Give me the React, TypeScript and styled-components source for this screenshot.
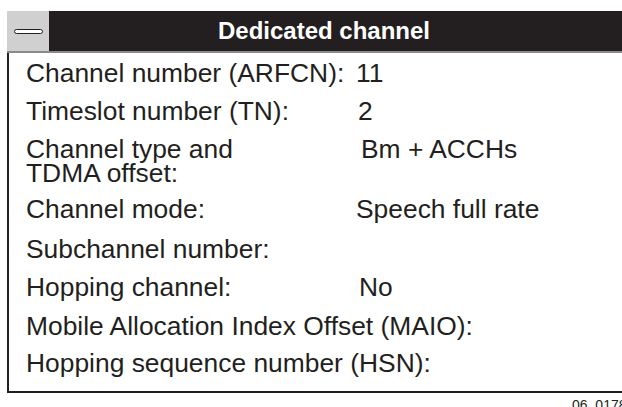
import styled, { createGlobalStyle } from "styled-components";

const ink = "#231f20";

const GlobalStyle = createGlobalStyle`
  html, body {
    margin: 0;
    padding: 0;
    background: #ffffff;
    overflow: hidden;
  }
  body {
    font-family: "Liberation Sans", Arial, Helvetica, sans-serif;
    color: ${ink};
  }
`;

const Page = styled.div`
  box-sizing: border-box;
  width: 622px;
  height: 407px;
  overflow: hidden;
  padding: 11px 0 0 7px;
`;

const Panel = styled.div`
  width: 634px;
  display: flex;
  flex-direction: column;
`;

const TitleBar = styled.div`
  height: 40px;
  display: flex;
  align-items: stretch;
  background: ${ink};
  border-bottom: 2px solid #8a8a8a;
`;

const MenuButton = styled.div`
  width: 42px;
  background: #d0d0d0;
  display: flex;
  align-items: center;
  justify-content: center;
`;

const MenuBar = styled.span`
  display: block;
  width: 27px;
  height: 3px;
  border: 1.5px solid ${ink};
  border-radius: 3px;
  background: #ffffff;
`;

const Title = styled.div`
  flex: 1;
  padding-right: 42px;
  display: flex;
  align-items: center;
  justify-content: center;
  color: #ffffff;
  font-weight: bold;
  font-size: 24px;
`;

const Body = styled.div`
  border-left: 2.5px solid ${ink};
  border-bottom: 2.5px solid ${ink};
  padding: 1px 0 8px 17px;
  display: flex;
  flex-direction: column;
`;

const Row = styled.div<{ $height: number }>`
  display: grid;
  grid-template-columns: 330px 1fr;
  height: ${(p) => p.$height}px;
  font-size: 26.4px;
  line-height: 38px;
  white-space: nowrap;
`;

const Label = styled.div<{ $wrap?: boolean }>`
  line-height: ${(p) => (p.$wrap ? "24px" : "38px")};
  padding-top: ${(p) => (p.$wrap ? "7px" : "0")};
`;

const Value = styled.div<{ $shift: number }>`
  padding-left: ${(p) => p.$shift}px;
`;

const Caption = styled.div`
  padding: 5px 0 0 565px;
  font-size: 14px;
  line-height: 14px;
  color: ${ink};
  white-space: nowrap;
`;

type Field = {
  label: string[];
  value?: string;
  shift?: number;
  height: number;
};

const fields: Field[] = [
  { label: ["Channel number (ARFCN):"], value: "11", shift: 0, height: 38 },
  { label: ["Timeslot number (TN):"], value: "2", shift: 2, height: 38 },
  { label: ["Channel type and", "TDMA offset:"], value: "Bm + ACCHs", shift: 5, height: 60 },
  { label: ["Channel mode:"], value: "Speech full rate", shift: -2, height: 40 },
  { label: ["Subchannel number:"], height: 38 },
  { label: ["Hopping channel:"], value: "No", shift: 3, height: 39 },
  { label: ["Mobile Allocation Index Offset (MAIO):"], height: 37 },
  { label: ["Hopping sequence number (HSN):"], height: 39 },
];

export default function App() {
  return (
    <>
      <GlobalStyle />
      <Page>
        <Panel>
          <TitleBar>
            <MenuButton>
              <MenuBar />
            </MenuButton>
            <Title>Dedicated channel</Title>
          </TitleBar>
          <Body>
            {fields.map((f) => (
              <Row key={f.label[0]} $height={f.height}>
                <Label $wrap={f.label.length > 1}>
                  {f.label.map((line) => (
                    <div key={line}>{line}</div>
                  ))}
                </Label>
                <Value $shift={f.shift ?? 0}>{f.value}</Value>
              </Row>
            ))}
          </Body>
        </Panel>
        <Caption>06_0178a</Caption>
      </Page>
    </>
  );
}
